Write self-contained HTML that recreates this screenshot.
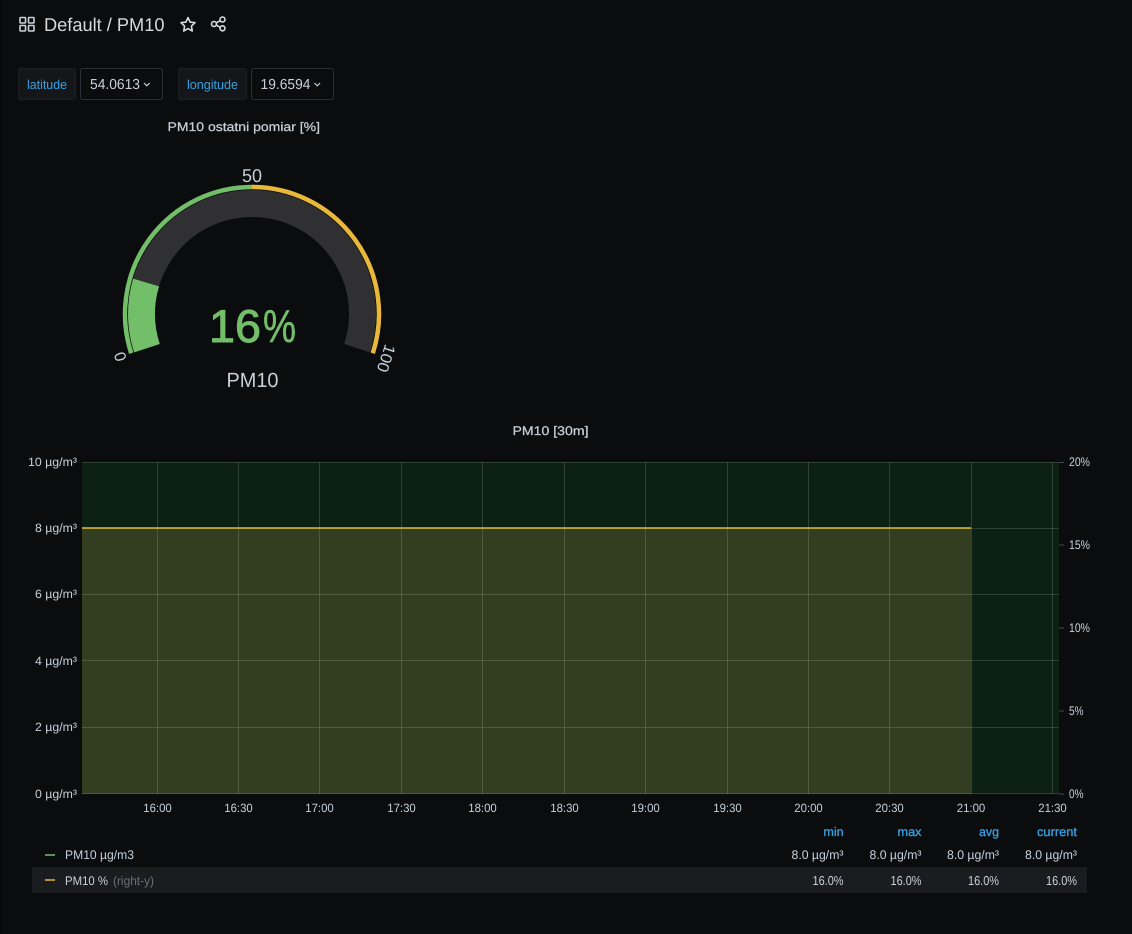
<!DOCTYPE html>
<html><head><meta charset="utf-8"><style>
html,body{margin:0;padding:0;background:#0b0c0e;width:1132px;height:934px;overflow:hidden}
svg{display:block}
text{font-family:"Liberation Sans",sans-serif;text-rendering:geometricPrecision}
.ax{font-size:12px;fill:#c7d0d9}
.lg{font-size:12.5px;fill:#c7d0d9}
.pc{font-size:13px;fill:#c7d0d9}
.hd{font-size:12.5px;fill:#33a2e5;stroke:#33a2e5;stroke-width:.3}
.ti{font-size:12.5px;fill:#c7d0d9;stroke:#c7d0d9;stroke-width:.25}
.grid{stroke:#fff;stroke-opacity:.15;stroke-width:1}
</style></head><body>
<svg width="1132" height="934" viewBox="0 0 1132 934" xmlns="http://www.w3.org/2000/svg">
<rect width="1132" height="934" fill="#0b0c0e"/>
<rect x="0" y="0" width="2" height="934" fill="#08090b"/>

<!-- header -->
<g fill="none" stroke="#c7d0d9" stroke-width="1.600">
<rect x="20" y="17.500" width="5.500" height="5.500" rx=".7"/><rect x="28.500" y="17.500" width="5.500" height="5.500" rx=".7"/>
<rect x="20" y="25.500" width="5.500" height="5.500" rx=".7"/><rect x="28.500" y="25.500" width="5.500" height="5.500" rx=".7"/>
</g>
<text x="44" y="31" font-size="18.500" fill="#d8d9da" textLength="120.500" lengthAdjust="spacingAndGlyphs">Default / PM10</text>
<path d="M188 17.600l2.100 4.500 4.900.6-3.600 3.400.9 4.900-4.300-2.400-4.300 2.400.9-4.900-3.600-3.400 4.900-.6z" fill="none" stroke="#d8d9da" stroke-width="1.600" stroke-linejoin="round"/>
<g fill="none" stroke="#d8d9da" stroke-width="1.600"><circle cx="222.500" cy="19.500" r="2.500"/><circle cx="222.500" cy="28.300" r="2.500"/><circle cx="214" cy="24" r="2.500"/><path d="M216.200 22.900l4-2.200M216.200 25.100l4 2.200"/></g>

<!-- variables -->
<rect x="18.500" y="68.500" width="57" height="31" rx="2" fill="#141619" stroke="#1c1e22"/>
<text x="27" y="89" font-size="13" fill="#33a2e5" textLength="40" lengthAdjust="spacingAndGlyphs">latitude</text>
<rect x="80.500" y="68.500" width="82" height="31" rx="2" fill="#0b0c0e" stroke="#2c2e33"/>
<text x="90" y="89" font-size="14.500" fill="#c7d0d9" textLength="50" lengthAdjust="spacingAndGlyphs">54.0613</text>
<path d="M144 83l2.800 2.800 2.800-2.800" fill="none" stroke="#c7d0d9" stroke-width="1.200"/>
<rect x="178.500" y="68.500" width="68" height="31" rx="2" fill="#141619" stroke="#1c1e22"/>
<text x="187" y="89" font-size="13" fill="#33a2e5" textLength="51" lengthAdjust="spacingAndGlyphs">longitude</text>
<rect x="251.500" y="68.500" width="82" height="31" rx="2" fill="#0b0c0e" stroke="#2c2e33"/>
<text x="260.500" y="89" font-size="14.500" fill="#c7d0d9" textLength="50" lengthAdjust="spacingAndGlyphs">19.6594</text>
<path d="M314.500 83l2.800 2.800 2.800-2.800" fill="none" stroke="#c7d0d9" stroke-width="1.200"/>

<!-- gauge -->
<text class="ti" x="167.500" y="131" textLength="152.500" lengthAdjust="spacingAndGlyphs">PM10 ostatni pomiar [%]</text>
<path d="M146.910 348.150A110.500 110.500 0 1 1 357.090 348.150" fill="none" stroke="#303032" stroke-width="27"/>
<path d="M146.910 348.150A110.500 110.500 0 0 1 146.080 282.510" fill="none" stroke="#73bf69" stroke-width="27"/>
<path d="M131.220 353.250A127 127 0 0 1 252 187" fill="none" stroke="#73bf69" stroke-width="4.500"/>
<path d="M252 187A127 127 0 0 1 372.780 353.250" fill="none" stroke="#eab839" stroke-width="4.500"/>
<text x="252" y="182" font-size="18.500" fill="#c7d0d9" text-anchor="middle" textLength="20" lengthAdjust="spacingAndGlyphs">50</text>
<text transform="translate(119 357) rotate(72)" font-size="16" fill="#c7d0d9" text-anchor="middle" dominant-baseline="middle">0</text>
<text transform="translate(385 358) rotate(108)" font-size="16" fill="#c7d0d9" text-anchor="middle" dominant-baseline="middle" textLength="28" lengthAdjust="spacingAndGlyphs">100</text>
<text x="209" y="342" font-size="46" fill="#73bf69" stroke="#73bf69" stroke-width="1" textLength="52" lengthAdjust="spacingAndGlyphs">16</text>
<text x="263" y="342" font-size="46" fill="#73bf69" stroke="#73bf69" stroke-width=".5" textLength="33" lengthAdjust="spacingAndGlyphs">%</text>
<text x="252.500" y="387" font-size="20.500" fill="#c7d0d9" text-anchor="middle" textLength="52" lengthAdjust="spacingAndGlyphs">PM10</text>

<!-- graph -->
<text class="ti" x="550.500" y="435" text-anchor="middle" textLength="76" lengthAdjust="spacingAndGlyphs">PM10 [30m]</text>
<rect x="82" y="462" width="977" height="332" fill="#0c2013"/>
<rect x="82" y="528" width="889" height="266" fill="#333d1f"/>
<g class="grid">
<path d="M82 462.500H1059M82 528.500H1059M82 594.500H1059M82 660.500H1059M82 727.500H1059M82 793.500H1059"/>
<path d="M157.500 462V794M238.500 462V794M319.500 462V794M401.500 462V794M482.500 462V794M564.500 462V794M645.500 462V794M727.500 462V794M808.500 462V794M889.500 462V794M971.500 462V794M1052.500 462V794"/>
</g>
<path d="M82 528H971" stroke="#e0b92f" stroke-width="1.500"/>
<path d="M1059 462.500h5M1059 545h5M1059 628h5M1059 711h5M1059 794h5" stroke="#44474d"/>

<g class="ax" text-anchor="end">
<text x="77" y="466" textLength="49" lengthAdjust="spacingAndGlyphs">10 µg/m³</text>
<text x="77" y="532" textLength="42" lengthAdjust="spacingAndGlyphs">8 µg/m³</text>
<text x="77" y="598" textLength="42" lengthAdjust="spacingAndGlyphs">6 µg/m³</text>
<text x="77" y="665" textLength="42" lengthAdjust="spacingAndGlyphs">4 µg/m³</text>
<text x="77" y="731" textLength="42" lengthAdjust="spacingAndGlyphs">2 µg/m³</text>
<text x="77" y="798" textLength="42" lengthAdjust="spacingAndGlyphs">0 µg/m³</text>
</g>
<g class="ax" style="font-size:12.500px">
<text x="1069" y="466" textLength="21" lengthAdjust="spacingAndGlyphs">20%</text><text x="1069" y="549" textLength="21" lengthAdjust="spacingAndGlyphs">15%</text><text x="1069" y="632" textLength="21" lengthAdjust="spacingAndGlyphs">10%</text><text x="1069" y="715" textLength="14.500" lengthAdjust="spacingAndGlyphs">5%</text><text x="1069" y="798" textLength="14.500" lengthAdjust="spacingAndGlyphs">0%</text>
</g>
<g class="ax" text-anchor="middle">
<text x="157.500" y="812" textLength="28.500" lengthAdjust="spacingAndGlyphs">16:00</text><text x="238.500" y="812" textLength="28.500" lengthAdjust="spacingAndGlyphs">16:30</text><text x="319.500" y="812" textLength="28.500" lengthAdjust="spacingAndGlyphs">17:00</text><text x="401.500" y="812" textLength="28.500" lengthAdjust="spacingAndGlyphs">17:30</text><text x="482.500" y="812" textLength="28.500" lengthAdjust="spacingAndGlyphs">18:00</text><text x="564.500" y="812" textLength="28.500" lengthAdjust="spacingAndGlyphs">18:30</text><text x="645.500" y="812" textLength="28.500" lengthAdjust="spacingAndGlyphs">19:00</text><text x="727.500" y="812" textLength="28.500" lengthAdjust="spacingAndGlyphs">19:30</text><text x="808.500" y="812" textLength="28.500" lengthAdjust="spacingAndGlyphs">20:00</text><text x="889.500" y="812" textLength="28.500" lengthAdjust="spacingAndGlyphs">20:30</text><text x="971" y="812" textLength="28.500" lengthAdjust="spacingAndGlyphs">21:00</text><text x="1052.500" y="812" textLength="28.500" lengthAdjust="spacingAndGlyphs">21:30</text>
</g>

<!-- legend -->
<rect x="32" y="867" width="1055" height="26" fill="#1b1c20"/>
<g class="hd" text-anchor="end">
<text x="843.500" y="836" textLength="20" lengthAdjust="spacingAndGlyphs">min</text>
<text x="921.500" y="836" textLength="24" lengthAdjust="spacingAndGlyphs">max</text>
<text x="999" y="836" textLength="20" lengthAdjust="spacingAndGlyphs">avg</text>
<text x="1077" y="836" textLength="40" lengthAdjust="spacingAndGlyphs">current</text>
</g>
<rect x="45" y="854" width="10" height="2" fill="#5f9058"/>
<rect x="45" y="879" width="10" height="2" fill="#b8923a"/>
<text class="lg" x="65" y="859" textLength="69" lengthAdjust="spacingAndGlyphs">PM10 µg/m3</text>
<text class="lg" x="65" y="885" textLength="43" lengthAdjust="spacingAndGlyphs">PM10 %</text>
<text x="113" y="885" font-size="12.500" fill="#6c6f75" textLength="41" lengthAdjust="spacingAndGlyphs">(right-y)</text>
<g class="lg" text-anchor="end">
<text x="843.500" y="859" textLength="52" lengthAdjust="spacingAndGlyphs">8.0 µg/m³</text>
<text x="921.500" y="859" textLength="52" lengthAdjust="spacingAndGlyphs">8.0 µg/m³</text>
<text x="999" y="859" textLength="52" lengthAdjust="spacingAndGlyphs">8.0 µg/m³</text>
<text x="1077" y="859" textLength="52" lengthAdjust="spacingAndGlyphs">8.0 µg/m³</text>
</g>
<g class="pc" text-anchor="end">
<text x="843.500" y="885" textLength="31" lengthAdjust="spacingAndGlyphs">16.0%</text>
<text x="921.500" y="885" textLength="31" lengthAdjust="spacingAndGlyphs">16.0%</text>
<text x="999" y="885" textLength="31" lengthAdjust="spacingAndGlyphs">16.0%</text>
<text x="1077" y="885" textLength="31" lengthAdjust="spacingAndGlyphs">16.0%</text>
</g>
</svg>
</body></html>
